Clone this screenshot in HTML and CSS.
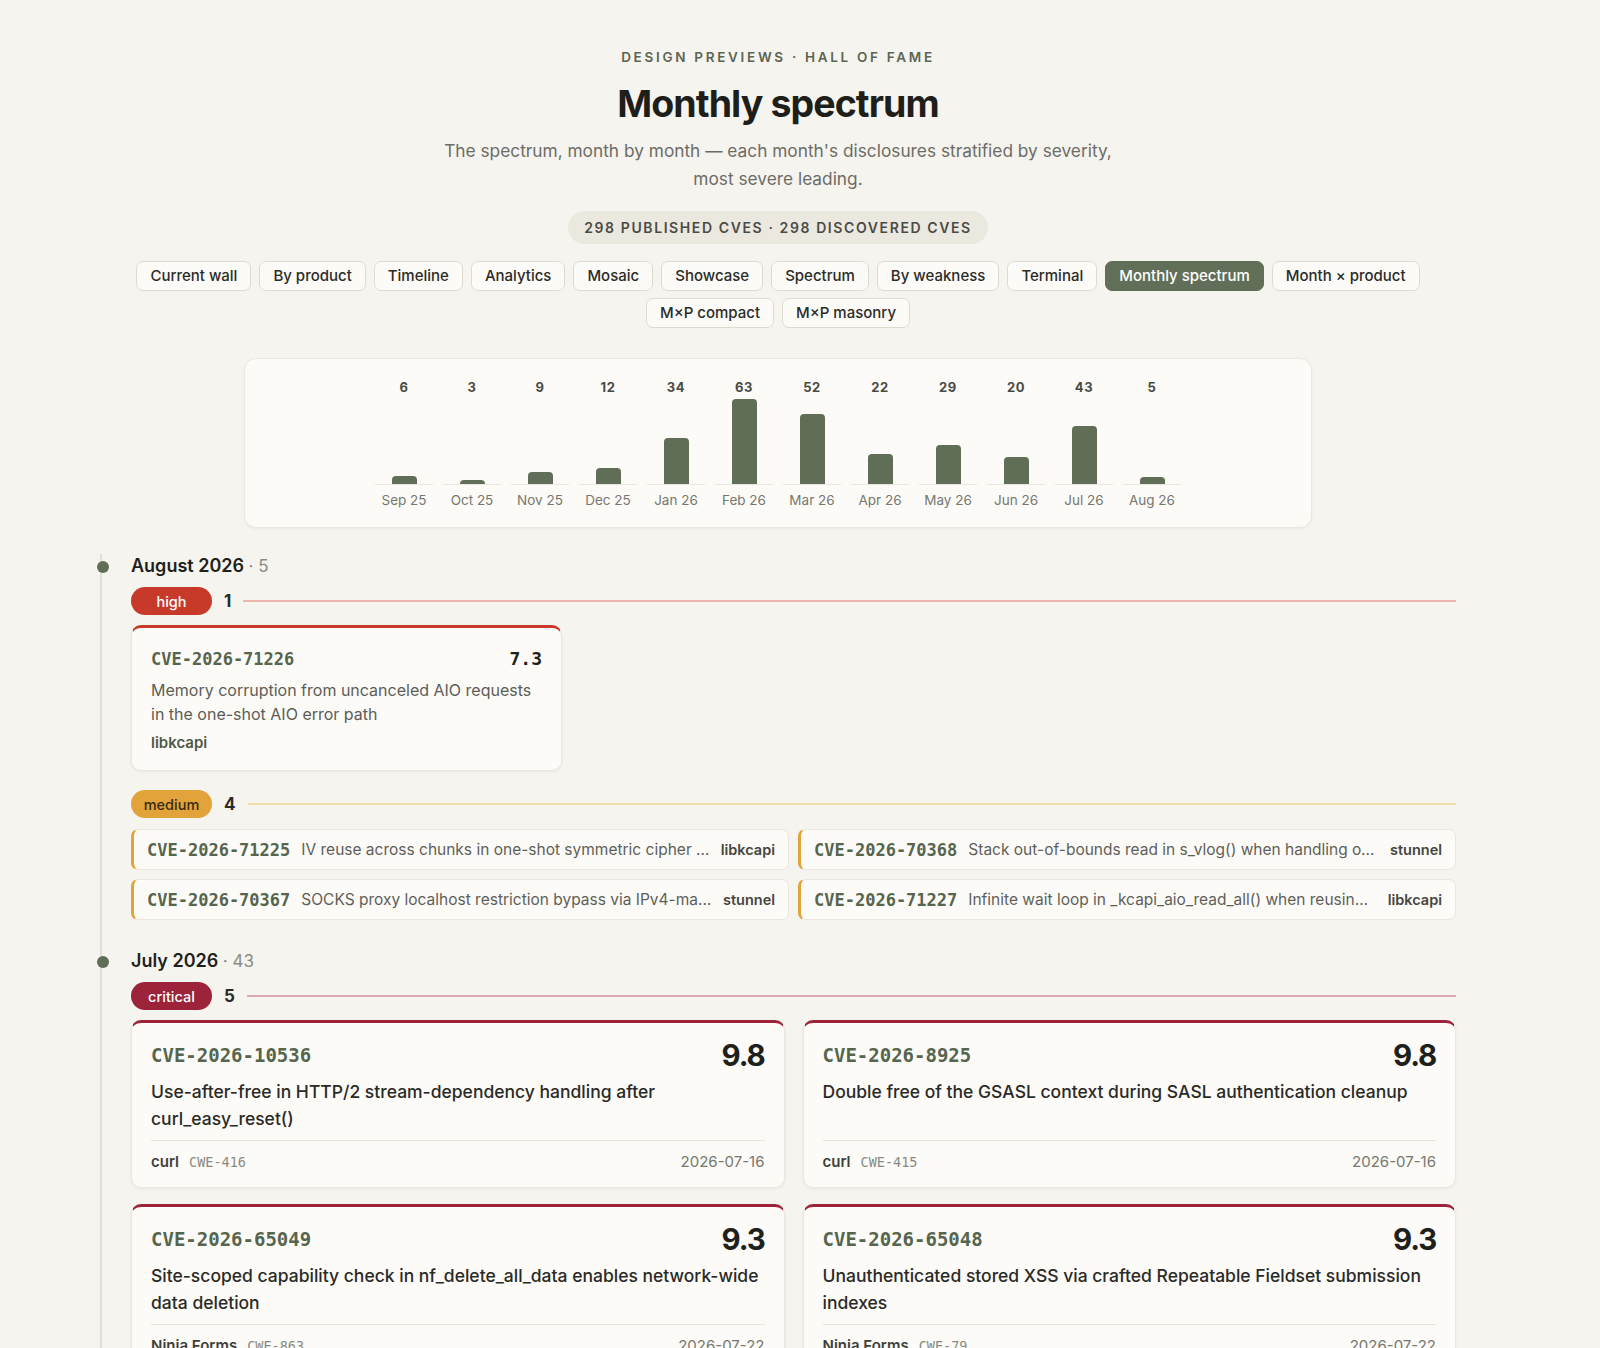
FILE: index.html
```html
<!DOCTYPE html>
<html lang="en">
<head>
<meta charset="utf-8">
<title>Monthly spectrum</title>
<link rel="stylesheet" href="styles.css">
</head>
<body>
<div class="page">
  <header class="hero">
    <div class="eyebrow">Design previews · Hall of fame</div>
    <h1 class="title">Monthly spectrum</h1>
    <p class="lede">The spectrum, month by month — each month's disclosures stratified by severity, most severe leading.</p>
    <div class="stats">298 published CVEs · 298 discovered CVEs</div>
    <nav class="tabs">
      <a class="tab">Current wall</a>
      <a class="tab">By product</a>
      <a class="tab">Timeline</a>
      <a class="tab">Analytics</a>
      <a class="tab">Mosaic</a>
      <a class="tab">Showcase</a>
      <a class="tab">Spectrum</a>
      <a class="tab">By weakness</a>
      <a class="tab">Terminal</a>
      <a class="tab tab-active">Monthly spectrum</a>
      <a class="tab">Month × product</a>
      <a class="tab">M×P compact</a>
      <a class="tab">M×P masonry</a>
    </nav>
  </header>

  <section class="chart">
    <div class="col"><span class="val">6</span><div class="barbox"><div class="bar" style="height:8px"></div></div><span class="mon">Sep 25</span></div>
    <div class="col"><span class="val">3</span><div class="barbox"><div class="bar" style="height:4px"></div></div><span class="mon">Oct 25</span></div>
    <div class="col"><span class="val">9</span><div class="barbox"><div class="bar" style="height:12px"></div></div><span class="mon">Nov 25</span></div>
    <div class="col"><span class="val">12</span><div class="barbox"><div class="bar" style="height:16px"></div></div><span class="mon">Dec 25</span></div>
    <div class="col"><span class="val">34</span><div class="barbox"><div class="bar" style="height:46px"></div></div><span class="mon">Jan 26</span></div>
    <div class="col"><span class="val">63</span><div class="barbox"><div class="bar" style="height:85px"></div></div><span class="mon">Feb 26</span></div>
    <div class="col"><span class="val">52</span><div class="barbox"><div class="bar" style="height:70px"></div></div><span class="mon">Mar 26</span></div>
    <div class="col"><span class="val">22</span><div class="barbox"><div class="bar" style="height:30px"></div></div><span class="mon">Apr 26</span></div>
    <div class="col"><span class="val">29</span><div class="barbox"><div class="bar" style="height:39px"></div></div><span class="mon">May 26</span></div>
    <div class="col"><span class="val">20</span><div class="barbox"><div class="bar" style="height:27px"></div></div><span class="mon">Jun 26</span></div>
    <div class="col"><span class="val">43</span><div class="barbox"><div class="bar" style="height:58px"></div></div><span class="mon">Jul 26</span></div>
    <div class="col"><span class="val">5</span><div class="barbox"><div class="bar" style="height:7px"></div></div><span class="mon">Aug 26</span></div>
  </section>

  <div class="timeline">
    <section class="month">
      <h2 class="month-head"><span class="dot"></span>August 2026 <span class="month-count">· 5</span></h2>

      <div class="sev sev-high">
        <div class="sev-head"><span class="pill">high</span><span class="count">1</span><span class="rule"></span></div>
        <div class="cards cards-3">
          <article class="ccard">
            <div class="ccard-head"><span class="cve">CVE-2026-71226</span><span class="mscore">7.3</span></div>
            <p class="ccard-desc">Memory corruption from uncanceled AIO requests in the one-shot AIO error path</p>
            <div class="ccard-prod">libkcapi</div>
          </article>
        </div>
      </div>

      <div class="sev sev-medium">
        <div class="sev-head"><span class="pill">medium</span><span class="count">4</span><span class="rule"></span></div>
        <div class="rows">
          <div class="row"><span class="cve">CVE-2026-71225</span><span class="row-desc">IV reuse across chunks in one-shot symmetric cipher operations</span><span class="row-prod">libkcapi</span></div>
          <div class="row"><span class="cve">CVE-2026-70368</span><span class="row-desc">Stack out-of-bounds read in s_vlog() when handling oversized log messages</span><span class="row-prod">stunnel</span></div>
          <div class="row"><span class="cve">CVE-2026-70367</span><span class="row-desc">SOCKS proxy localhost restriction bypass via IPv4-mapped IPv6 addresses</span><span class="row-prod">stunnel</span></div>
          <div class="row"><span class="cve">CVE-2026-71227</span><span class="row-desc">Infinite wait loop in _kcapi_aio_read_all() when reusing a handle</span><span class="row-prod">libkcapi</span></div>
        </div>
      </div>
    </section>

    <section class="month">
      <h2 class="month-head"><span class="dot"></span>July 2026 <span class="month-count">· 43</span></h2>

      <div class="sev sev-critical">
        <div class="sev-head"><span class="pill">critical</span><span class="count">5</span><span class="rule"></span></div>
        <div class="cards cards-2">
          <article class="fcard">
            <div class="fcard-head"><span class="cve">CVE-2026-10536</span><span class="fscore">9.8</span></div>
            <p class="fcard-desc">Use-after-free in HTTP/2 stream-dependency handling after curl_easy_reset()</p>
            <div class="fcard-foot"><span class="prod">curl</span><span class="cwe">CWE-416</span><span class="date">2026-07-16</span></div>
          </article>
          <article class="fcard">
            <div class="fcard-head"><span class="cve">CVE-2026-8925</span><span class="fscore">9.8</span></div>
            <p class="fcard-desc">Double free of the GSASL context during SASL authentication cleanup</p>
            <div class="fcard-foot"><span class="prod">curl</span><span class="cwe">CWE-415</span><span class="date">2026-07-16</span></div>
          </article>
          <article class="fcard">
            <div class="fcard-head"><span class="cve">CVE-2026-65049</span><span class="fscore">9.3</span></div>
            <p class="fcard-desc">Site-scoped capability check in nf_delete_all_data enables network-wide data deletion</p>
            <div class="fcard-foot"><span class="prod">Ninja Forms</span><span class="cwe">CWE-863</span><span class="date">2026-07-22</span></div>
          </article>
          <article class="fcard">
            <div class="fcard-head"><span class="cve">CVE-2026-65048</span><span class="fscore">9.3</span></div>
            <p class="fcard-desc">Unauthenticated stored XSS via crafted Repeatable Fieldset submission indexes</p>
            <div class="fcard-foot"><span class="prod">Ninja Forms</span><span class="cwe">CWE-79</span><span class="date">2026-07-22</span></div>
          </article>
          <article class="fcard">
            <div class="fcard-head"><span class="cve">CVE-2026-64410</span><span class="fscore">9.1</span></div>
            <p class="fcard-desc">Authentication bypass in the session restore endpoint</p>
            <div class="fcard-foot"><span class="prod">Ninja Forms</span><span class="cwe">CWE-287</span><span class="date">2026-07-09</span></div>
          </article>
        </div>
      </div>
    </section>
  </div>
</div>
</body>
</html>
```

FILE: styles.css
```css
* { box-sizing: border-box; }

html, body { margin: 0; padding: 0; }

body {
  background: #f6f4ef;
  font-family: Inter, "Noto Sans", "Liberation Sans", sans-serif;
  color: #23231f;
}

.page {
  width: 1356px;
  margin-left: 100px;
  padding: 48px 0 60px;
}

/* ---------- hero ---------- */
.hero {
  display: flex;
  flex-direction: column;
  align-items: center;
  text-align: center;
}

.eyebrow {
  font-size: 13.5px;
  line-height: 18px;
  font-weight: 600;
  letter-spacing: 2.7px;
  text-transform: uppercase;
  color: #5b6552;
}

.title {
  margin: 15px 0 0;
  font-size: 37.5px;
  line-height: 46px;
  font-weight: 700;
  letter-spacing: -0.9px;
  color: #1e1e1b;
}

.lede {
  margin: 10px 0 0;
  max-width: 700px;
  font-size: 17.3px;
  line-height: 27.5px;
  color: #6c6c66;
}

.stats {
  margin-top: 19px;
  height: 33px;
  line-height: 33px;
  padding: 0 16px;
  border-radius: 999px;
  background: #ebe8e0;
  font-size: 14px;
  font-weight: 600;
  letter-spacing: 1.6px;
  text-transform: uppercase;
  color: #4b4b45;
}

.tabs {
  margin-top: 17px;
  display: flex;
  flex-wrap: wrap;
  justify-content: center;
  gap: 7px 8px;
}

.tab {
  display: block;
  height: 30px;
  line-height: 28px;
  padding: 0 13px;
  border: 1px solid #dfdbd0;
  border-radius: 7px;
  background: #fcfbf8;
  font-size: 15px;
  font-weight: 500;
  color: #2b2b27;
}

.tab-active {
  background: #626f58;
  border-color: #626f58;
  color: #ffffff;
}

/* ---------- chart ---------- */
.chart {
  width: 1068px;
  margin: 30px auto 0;
  padding: 20px 0 19px;
  display: flex;
  justify-content: center;
  gap: 10px;
  background: #fcfbf8;
  border: 1px solid #ebe7de;
  border-radius: 12px;
  box-shadow: 0 1px 3px rgba(60, 50, 30, 0.05);
}

.col {
  width: 58px;
  display: flex;
  flex-direction: column;
  align-items: center;
}

.val {
  font-size: 13px;
  line-height: 16px;
  font-weight: 700;
  letter-spacing: 0.6px;
  color: #4a4a44;
}

.barbox {
  margin-top: 4px;
  width: 100%;
  height: 86px;
  display: flex;
  align-items: flex-end;
  justify-content: center;
  border-bottom: 1.5px solid #ebe7dc;
}

.bar {
  width: 25px;
  background: #616e57;
  border-radius: 4px 4px 0 0;
}

.mon {
  margin-top: 7px;
  font-size: 13.5px;
  line-height: 16px;
  color: #77776f;
}

/* ---------- timeline ---------- */
.timeline {
  position: relative;
  margin-top: 26px;
  padding-left: 31px;
}

.timeline::before {
  content: "";
  position: absolute;
  left: 0;
  top: 0;
  bottom: 0;
  width: 2px;
  background: #e3dfd5;
}

.month + .month { margin-top: 29px; }

.month-head {
  position: relative;
  margin: 0;
  font-size: 18px;
  line-height: 24px;
  font-weight: 600;
  color: #1f1f1c;
}

.month-count {
  font-weight: 400;
  font-size: 17px;
  color: #8b8b83;
}

.dot {
  position: absolute;
  left: -34.5px;
  top: 7px;
  width: 12px;
  height: 12px;
  border-radius: 50%;
  background: #616e57;
}

.sev { margin-top: 9px; }
.sev + .sev { margin-top: 19px; }
.sev-high { --sev: #c73a2a; --sev-soft: #ecb6ae; }
.sev-medium { --sev: #e2a33a; --sev-soft: #f2d9a8; }
.sev-critical { --sev: #9c2339; --sev-soft: #ddabb3; }

.sev-head {
  display: flex;
  align-items: center;
  gap: 12px;
  height: 28px;
}

.pill {
  width: 81px;
  height: 28px;
  border-radius: 14px;
  display: flex;
  align-items: center;
  justify-content: center;
  background: var(--sev);
  color: #ffffff;
  font-size: 14.5px;
  font-weight: 500;
}

.sev-medium .pill { color: #3a2a0d; }

.count {
  font-size: 17px;
  font-weight: 700;
  color: #2a2a26;
}

.rule {
  flex: 1;
  height: 2px;
  background: var(--sev-soft);
}

.cve {
  font-family: "DejaVu Sans Mono", "Liberation Mono", monospace;
  font-weight: 700;
  font-size: 17px;
  color: #56654e;
  white-space: nowrap;
}

.cards {
  margin-top: 10px;
  display: grid;
  gap: 16px;
}

.cards-3 { grid-template-columns: repeat(3, 1fr); }
.cards-2 { grid-template-columns: repeat(2, 1fr); gap: 16px 18px; }

/* compact card */
.ccard {
  background: #fcfbf8;
  border: 1px solid #ebe7de;
  border-top: 3px solid var(--sev);
  border-radius: 10px;
  padding: 21px 19px 17px;
  box-shadow: 0 1px 3px rgba(60, 50, 30, 0.07);
}

.ccard-head {
  display: flex;
  justify-content: space-between;
  align-items: baseline;
  line-height: 20px;
}

.mscore {
  font-family: "DejaVu Sans Mono", "Liberation Mono", monospace;
  font-weight: 700;
  font-size: 18px;
  color: #1f1f1c;
}

.ccard-desc {
  margin: 10px 0 0;
  font-size: 16px;
  line-height: 23.5px;
  color: #5d5d57;
}

.ccard-prod {
  margin-top: 7px;
  font-size: 15px;
  line-height: 20px;
  font-weight: 600;
  color: #4e5848;
}

/* rows */
.rows {
  margin-top: 11px;
  display: grid;
  grid-template-columns: 1fr 1fr;
  gap: 9px 9px;
}

.row {
  display: flex;
  align-items: center;
  gap: 11px;
  height: 41px;
  padding: 0 13px;
  background: #fcfbf8;
  border: 1px solid #ebe7de;
  border-left: 3px solid var(--sev);
  border-radius: 7px;
  min-width: 0;
}

.row-desc {
  flex: 1;
  min-width: 0;
  white-space: nowrap;
  overflow: hidden;
  text-overflow: ellipsis;
  font-size: 15.5px;
  color: #5f5f58;
}

.row-prod {
  font-size: 14.5px;
  font-weight: 600;
  color: #45453f;
  white-space: nowrap;
}

/* feature card */
.fcard {
  display: flex;
  flex-direction: column;
  background: #fcfbf8;
  border: 1px solid #ebe7de;
  border-top: 3px solid var(--sev);
  border-radius: 10px;
  padding: 14px 19px 15px;
  box-shadow: 0 1px 3px rgba(60, 50, 30, 0.07);
}

.fcard-head {
  display: flex;
  justify-content: space-between;
  align-items: center;
  height: 36px;
}

.fcard .cve { font-size: 19px; }

.fscore {
  font-size: 29.5px;
  font-weight: 700;
  letter-spacing: -1.2px;
  color: #1f1f1c;
}

.fcard-desc {
  flex: 1;
  margin: 6px 0 0;
  font-size: 17.5px;
  line-height: 26.5px;
  font-weight: 500;
  color: #2a2a26;
}

.fcard-foot {
  margin-top: 8px;
  padding-top: 11px;
  border-top: 1px solid #e9e5dc;
  display: flex;
  align-items: center;
  gap: 10px;
  line-height: 20px;
}

.prod {
  font-size: 15px;
  font-weight: 600;
  color: #3f3f3a;
}

.cwe {
  font-family: "DejaVu Sans Mono", "Liberation Mono", monospace;
  font-size: 13.5px;
  color: #8a8a82;
}

.date {
  margin-left: auto;
  font-size: 15px;
  color: #77776f;
}
```
